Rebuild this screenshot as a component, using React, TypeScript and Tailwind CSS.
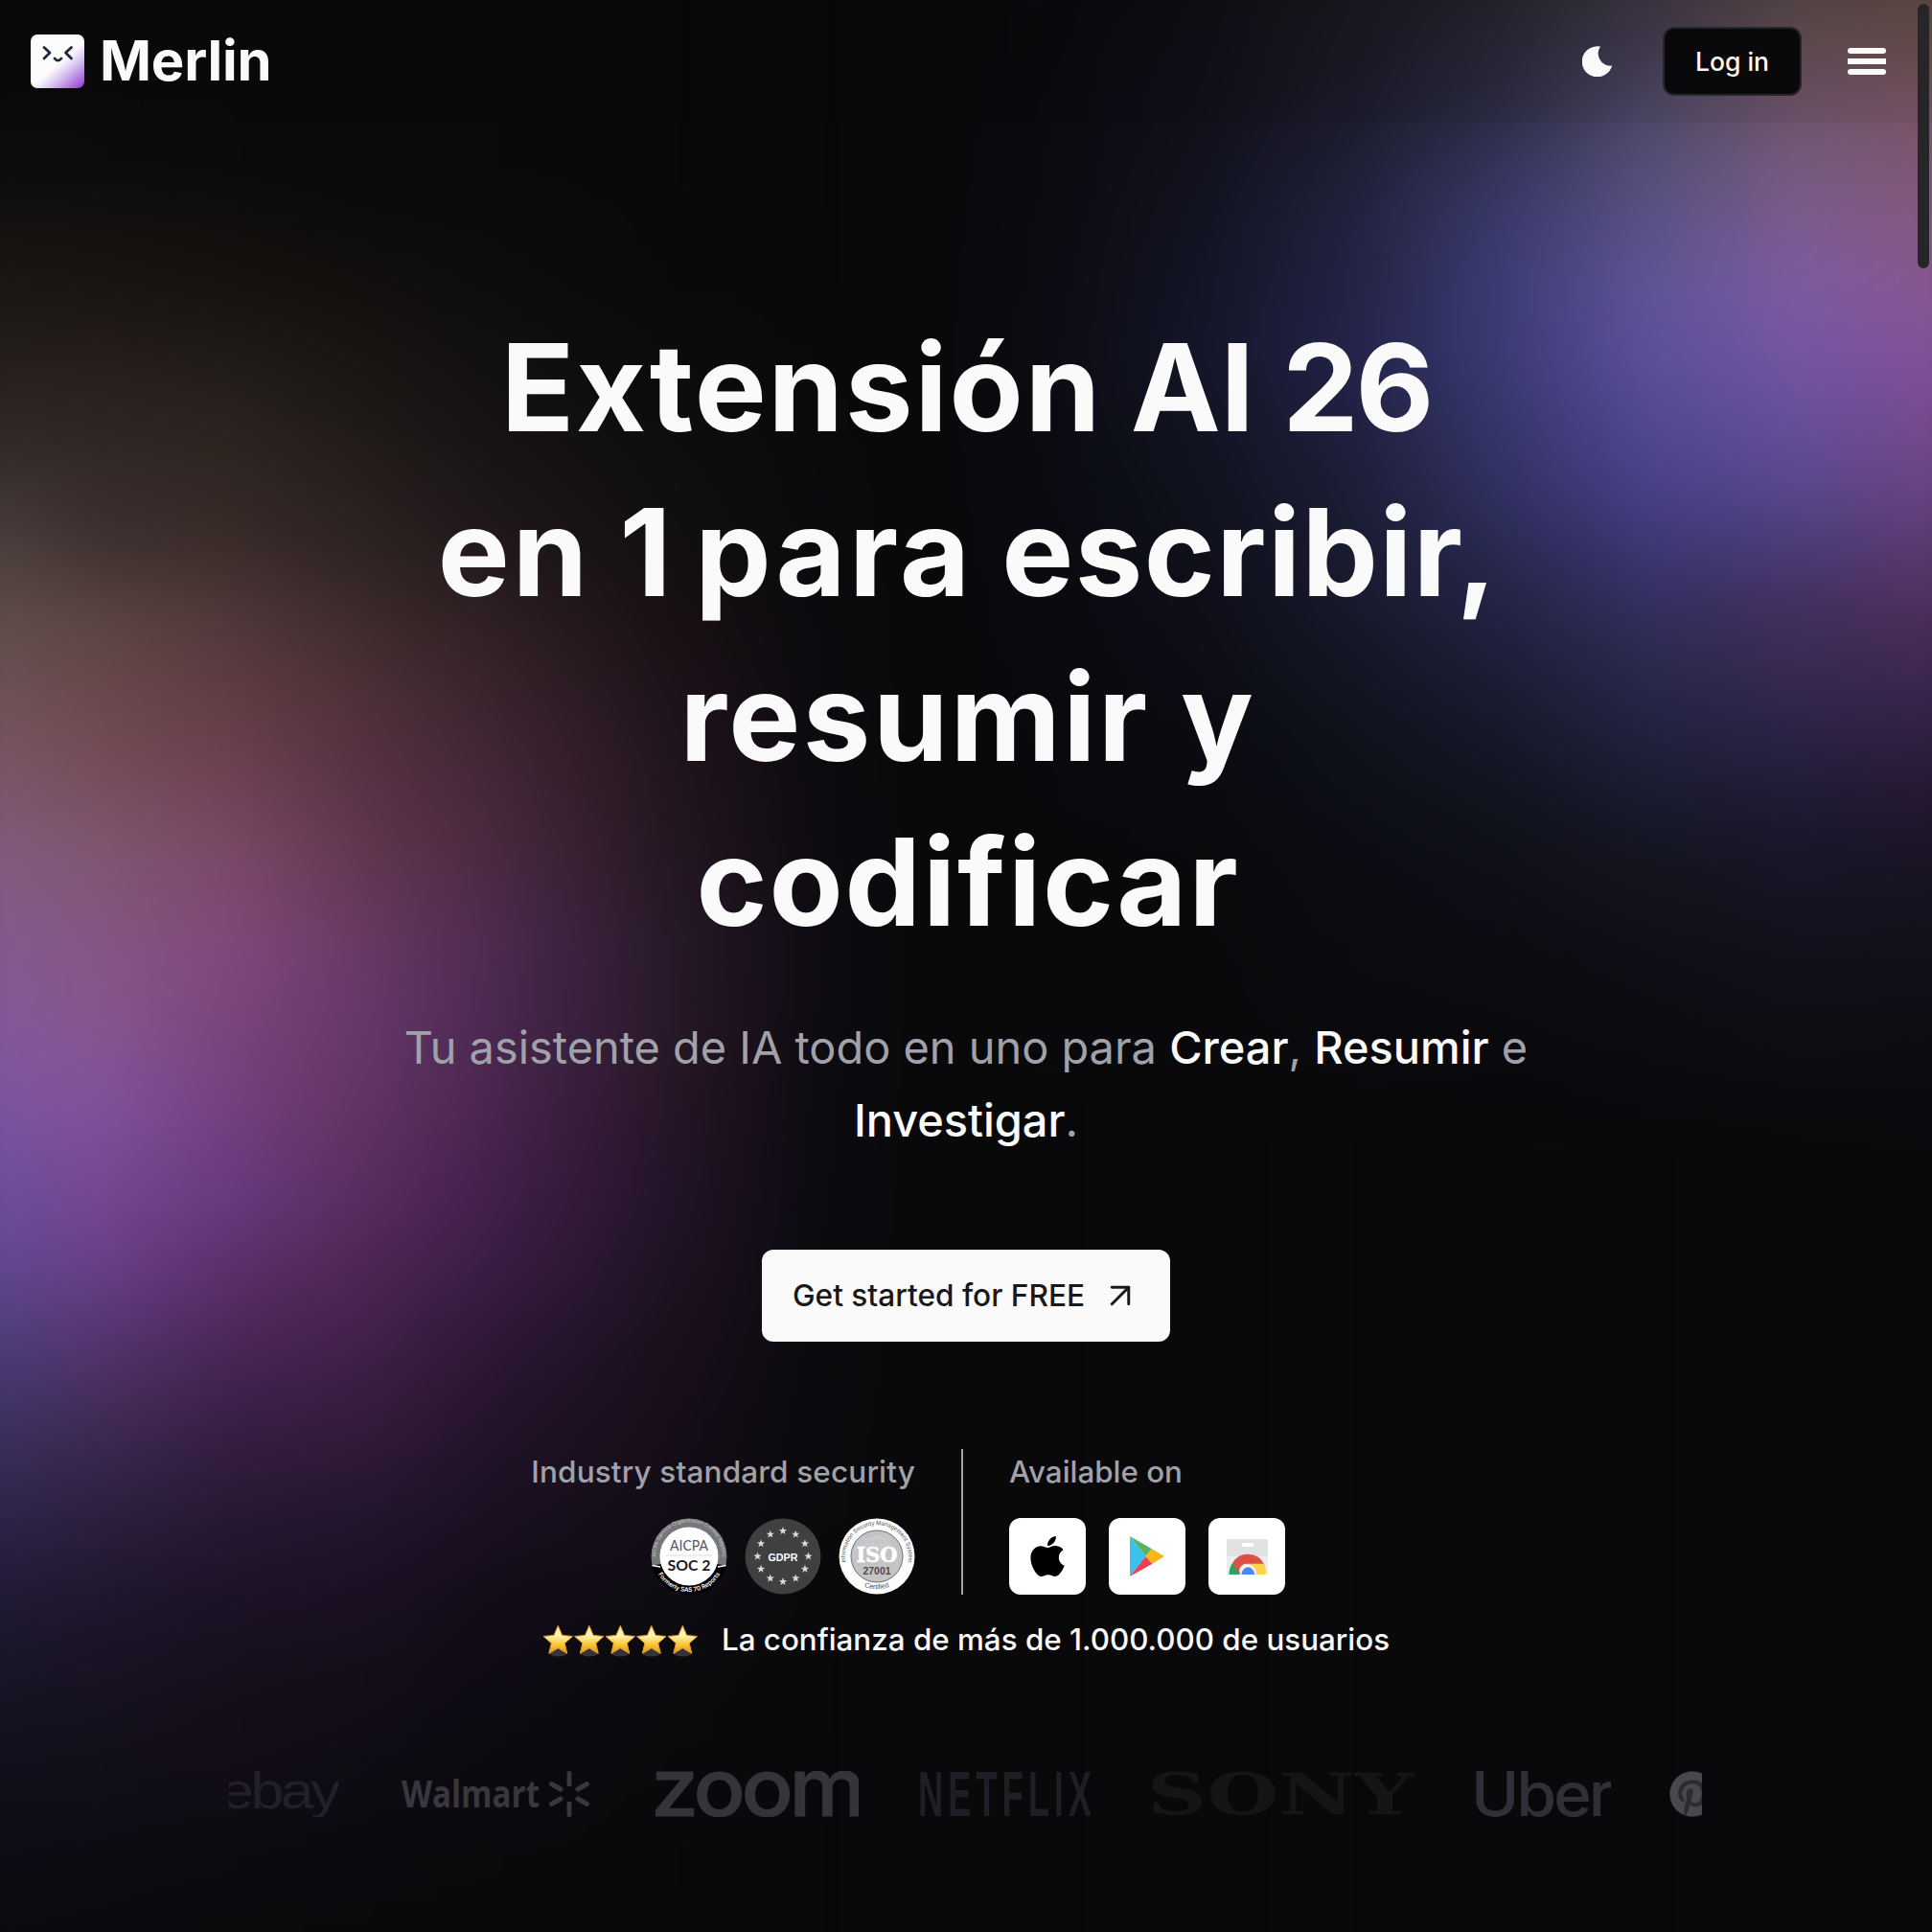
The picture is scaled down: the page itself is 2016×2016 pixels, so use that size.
import React from "react";
import { ArrowUpRight } from "lucide-react";
import { FaApple, FaPinterest } from "react-icons/fa";

/* ---------- Aurora background: colour columns blended from left to right ---------- */

type Column = { x: number; stops: string };

const LEFT_ROWS = [200, 316, 432, 501, 582, 663, 733, 802, 895, 987, 1068, 1150, 1242, 1312, 1393, 1474, 1566, 1648, 1729, 1821, 1914, 2016];

const zip = (rows: number[], colours: string) =>
  colours
    .split(" ")
    .map((c, i) => (c === "-" ? "" : `#${c} ${rows[i]}px`))
    .filter(Boolean)
    .join(", ");

const leftColumns: Column[] = [
  { x: 0, stops: "#0a0a0c 90px, " + zip(LEFT_ROWS, "0d0d0f 1c1713 2a2421 382f2d 4f4340 624f4b 6f555a 7a5868 825d80 835c92 825a9c 7a56a0 6c509c 5f4a92 4c3f7c 3c3264 2e264c 221b38 191527 11101d 0d0d15 0b0b0e") },
  { x: 134, stops: "#0a0a0c 90px, " + zip(LEFT_ROWS, "0d0c0d 1a1512 2a221f - 3f3230 5d4543 6a484c 754c58 805671 865584 87558f 81519a 74478f 683f86 53346c 3f2a54 2c1f3e 1f172e 181222 120f19 0d0c12 0a0a0d") },
  { x: 268, stops: "#0a0a0c 90px, " + zip(LEFT_ROWS, "0c0b0c 16120f 26201b - 3a2c29 52383a 5f3c42 6c4050 7a4865 80487a 7a447c 743f7e 68397c 5b2f6a 4a2658 371f44 281832 1c1226 160f1c 120d17 0c0b10 0a0a0c") },
  { x: 402, stops: "#0a0a0b 90px, " + zip(LEFT_ROWS, "0a0a0b 120f0e 1c1816 - 2d2323 3e2b2c 4d3038 553142 61364f 683863 663668 623262 582c60 4d2753 412048 331b3b 23152d 1a1022 140e19 0f0c14 0b0a0e 09090b") },
  { x: 536, stops: "#0a0a0b 90px, " + zip(LEFT_ROWS, "0a0a0c 0e0d0d 141111 - 201819 2e1f23 38232d 412635 482940 4b2a4e 49284f 47254c 401f48 391c42 2c1735 241329 1a1021 130c18 0f0b14 0c0a10 0a0a0d 09090b") },
  { x: 700, stops: "#09090b 90px, " + zip(LEFT_ROWS, "09090b 0a0a0c 0d0c0e - 131012 1a1116 1f141b 23161e 261823 291a2b 2a192a 281628 24142a 201324 1b101e 170e1a 120d16 0f0c12 0b0a0d 0a090c 09090b 09090b") },
  { x: 850, stops: "#09090b 300px, #0d0b0f 700px, #100c13 1000px, #0d0b10 1300px, #09090b 1700px" },
  { x: 960, stops: "#09090b 0px, #09090b 2016px" },
];

const RIGHT_ROWS = [0, 64, 128, 190, 257, 320, 385, 450, 514, 578, 640, 705, 770, 835, 900, 1000, 1100, 1200];

const rightColumns: Column[] = [
  { x: 1100, stops: "#0a0a0d 0px, #0c0d14 385px, #0a0b10 640px, #09090b 1000px" },
  { x: 1250, stops: "#0e0e12 0px, #10101a 128px, #131422 257px, #15162a 385px, #11131f 514px, #0e0f19 640px, #0b0c12 770px, #0a0a0d 900px, #09090b 1200px" },
  { x: 1400, stops: "#17171c 0px, #1b1b2a 128px, #222240 257px, #23244a 385px, #1d1e38 514px, #181a2c 640px, #10121c 770px, #0c0d13 900px, #09090b 1200px" },
  { x: 1550, stops: zip(RIGHT_ROWS, "232228 262634 2b2a40 33335a 3a3a6c 3c3c74 3b3b74 37376c 323264 2a2b54 232446 1d1e38 17192b 12141f 0f1018 0c0c12 0a0a0e 09090b") },
  { x: 1700, stops: zip(RIGHT_ROWS, "3a343c 40384a 4a4460 544e76 5a5286 5f5496 5d509c 534a94 4a428a 3e3876 34305f 2b294e 222240 1a1b30 14151f 0e0f16 0b0b10 09090b") },
  { x: 1850, stops: zip(RIGHT_ROWS, "504240 5d4b50 6c5264 745a7c 7c5c90 7c5ba0 7556a0 68509a 5c488e 4b3d78 43305f 392a54 2c2345 201b36 181628 11111b 0d0d12 09090b") },
  { x: 2016, stops: zip(RIGHT_ROWS, "5e4842 664a46 785460 7f5670 86587e 8a568c 855098 7a4a8c 6e4480 5f3a70 50305f 402850 331f42 261832 1b1424 121019 0d0c11 0a0a0d") },
];

const columns = [...leftColumns, ...rightColumns];

function Aurora() {
  return (
    <div className="absolute inset-0 overflow-hidden">
      <div className="absolute inset-0 scale-[1.03] blur-lg">
        {columns.map((c, i) => {
          const mask = i === 0 ? "none" : `linear-gradient(to right, transparent ${columns[i - 1].x}px, #000 ${c.x}px)`;
          return (
            <div
              key={c.x}
              className="absolute inset-0"
              style={{ backgroundImage: `linear-gradient(to bottom, ${c.stops})`, maskImage: mask }}
            />
          );
        })}
      </div>
    </div>
  );
}

/* ---------- Header ---------- */

function MerlinMark() {
  return (
    <svg viewBox="0 0 56 56" className="size-14">
      <defs>
        <linearGradient id="mark" x1="0.3" y1="0.2" x2="1" y2="1">
          <stop offset="0.38" stopColor="#fdfcfd" />
          <stop offset="0.6" stopColor="#d6c0ee" />
          <stop offset="0.95" stopColor="#9a45da" />
        </linearGradient>
      </defs>
      <rect width="56" height="56" rx="7" fill="url(#mark)" />
      <g fill="none" stroke="#1d2738" strokeWidth="2.8" strokeLinecap="round" strokeLinejoin="round">
        <path d="M14 13.5 L20 19 L14 25" />
        <path d="M42.5 13.5 L36.500 19 L42.500 25" />
        <path d="M25 25 Q28.500 29.400 32 25" />
      </g>
    </svg>
  );
}

function Header() {
  return (
    <header className="flex h-32 items-center justify-between bg-[#09090b]/4 pr-12 pl-8">
      <div className="flex items-center gap-4">
        <MerlinMark />
        <span className="-mt-0.5 text-[58px] leading-none font-bold tracking-[-0.2px]">Merlin</span>
      </div>
      <div className="flex items-center">
        <svg viewBox="0 0 32 32" className="size-8">
          <path d="M19 0.600 A16 16 0 1 0 31.200 20.500 A12.800 12.800 0 0 1 19 0.600 Z" fill="#fafafa" />
        </svg>
        <button className="ml-[52px] flex h-[72px] w-[145px] items-center justify-center rounded-xl border-2 border-[#27272a] bg-[#09090b] pt-0.5 text-[26.500px] font-medium">
          Log in
        </button>
        <div className="ml-12 flex w-10 flex-col gap-[5px]">
          <span className="h-1.5 rounded-full bg-[#fafafa]" />
          <span className="h-1.5 bg-[#fafafa]" />
          <span className="h-1.5 rounded-full bg-[#fafafa]" />
        </div>
      </div>
    </header>
  );
}

/* ---------- Security badges ---------- */

function SocBadge() {
  return (
    <svg viewBox="0 0 80 80" className="size-20">
      <defs>
        <path id="socTop" d="M6.500 47 A34.500 34.500 0 1 1 73.500 47" />
        <path id="socBottom" d="M5 53 A37.500 37.500 0 0 0 75 53" />
      </defs>
      <circle cx="40" cy="40" r="39.500" fill="#77777a" />
      <path d="M1 49.500 A40 40 0 0 0 79 49.500 L40 44 Z" fill="#000" />
      <path d="M1.500 49.500 L10 51 M78.500 49.500 L70 51" stroke="#fff" strokeWidth="1.500" />
      <circle cx="40" cy="40" r="30.500" fill="#fff" />
      <text fontSize="5.400" fill="#c4c4c6" textAnchor="middle">
        <textPath href="#socTop" startOffset="50%">AICPA Service Organization Control Reports</textPath>
      </text>
      <text fontSize="6.400" fontWeight="600" fill="#fff" textAnchor="middle">
        <textPath href="#socBottom" startOffset="50%">Formerly SAS 70 Reports</textPath>
      </text>
      <text x="40" y="34" fontFamily="Lato" fontSize="14.500" fill="#55555a" textAnchor="middle" textLength="40" lengthAdjust="spacingAndGlyphs">AICPA</text>
      <path d="M16 39 H64" stroke="#d6d6d8" strokeWidth="0.800" />
      <text x="40" y="54.500" fontFamily="Lato" fontWeight="700" fontSize="16" fill="#1c1c1f" textAnchor="middle" textLength="45" lengthAdjust="spacingAndGlyphs">SOC 2</text>
    </svg>
  );
}

const starPoints = (cx: number, cy: number, r: number, inner = 0.4) =>
  Array.from({ length: 10 }, (_, i) => {
    const a = (Math.PI / 5) * i - Math.PI / 2;
    const d = i % 2 ? r * inner : r;
    return `${(cx + d * Math.cos(a)).toFixed(2)},${(cy + d * Math.sin(a)).toFixed(2)}`;
  }).join(" ");

function GdprBadge() {
  return (
    <svg viewBox="0 0 80 80" className="size-20">
      <circle cx="40" cy="40" r="39.500" fill="#404040" />
      {Array.from({ length: 12 }, (_, i) => {
        const a = (Math.PI / 6) * i;
        return <polygon key={i} points={starPoints(40 + 26.5 * Math.sin(a), 40 - 26.5 * Math.cos(a), 4.4)} fill="#dcdcdc" />;
      })}
      <text x="40" y="45" fontFamily="Liberation Sans" fontWeight="700" fontSize="11.500" fill="#fff" textAnchor="middle" textLength="31" lengthAdjust="spacingAndGlyphs">GDPR</text>
    </svg>
  );
}

function IsoBadge() {
  return (
    <svg viewBox="0 0 80 80" className="size-20">
      <defs>
        <path id="isoTop" d="M7.500 46 A33 33 0 1 1 72.500 46" />
        <path id="isoBottom" d="M8 54 A35.500 35.500 0 0 0 72 54" />
      </defs>
      <circle cx="40" cy="40" r="39.500" fill="#fdfdfd" />
      <circle cx="40" cy="40" r="27" fill="#c4c4c6" stroke="#6c6c70" strokeWidth="1" />
      <g fill="none" stroke="#d6d6d8" strokeWidth="0.800">
        <circle cx="40" cy="30" r="11" />
        <ellipse cx="40" cy="30" rx="5" ry="11" />
        <path d="M25 22 H55 M23 28 H57" />
      </g>
      <text fontFamily="Liberation Sans" fontSize="6.200" fill="#515155" textAnchor="middle">
        <textPath href="#isoTop" startOffset="50%">Information Security Management System</textPath>
      </text>
      <text fontFamily="Liberation Sans" fontSize="7.200" fill="#515155" textAnchor="middle">
        <textPath href="#isoBottom" startOffset="50%">Certified</textPath>
      </text>
      <text x="40" y="45.500" fontFamily="DejaVu Serif" fontWeight="700" fontSize="22" fill="#fff" stroke="#fff" strokeWidth="0.500" textAnchor="middle" textLength="43" lengthAdjust="spacingAndGlyphs">ISO</text>
      <text x="40" y="58.500" fontFamily="Liberation Sans" fontWeight="700" fontSize="11" fill="#4a4a4e" textAnchor="middle" textLength="29" lengthAdjust="spacingAndGlyphs">27001</text>
    </svg>
  );
}

/* ---------- Store tiles ---------- */

function Tile({ children }: { children: React.ReactNode }) {
  return <div className="flex size-20 items-center justify-center rounded-xl bg-white">{children}</div>;
}

function PlayIcon() {
  return (
    <svg viewBox="0 0 36 42" className="h-[42px] w-9">
      <path d="M0 0 L16.500 21 L0 42 Z" fill="#3cc0ee" />
      <path d="M0 0 L23 13.200 L16.500 21 Z" fill="#58b368" />
      <path d="M0 42 L23.500 28.800 L16.500 21 Z" fill="#ea4058" />
      <path d="M23 13.200 L36 21 L23.500 28.800 L16.500 21 Z" fill="#f8b616" />
    </svg>
  );
}

function WebStoreIcon() {
  return (
    <svg viewBox="0 0 43 37" className="h-[37px] w-[43px]">
      <path d="M0 0 H43 V36 Q43 37 42 37 H1 Q0 37 0 36 Z" fill="#ededed" />
      <path d="M0 0 H43 V18 H0 Z" fill="#e2e2e2" />
      <rect x="15.500" y="4" width="13" height="4" rx="2" fill="#fff" />
      <path d="M2.500 37 A19 20.500 0 0 1 6 25 L16 37 Z" fill="#23a566" />
      <path d="M22 25.500 H39 A19 20 0 0 1 41 37 H22 Z" fill="#fdd24e" />
      <path d="M6 25 A19 19 0 0 1 39 25.800 H22 A8 9 0 0 0 13 37 Z" fill="#dc5145" />
      <path d="M13.500 37 A8.700 10.500 0 0 1 31 37 Z" fill="#f4f4f4" />
      <path d="M15.300 37 A7 8.800 0 0 1 29.200 37 Z" fill="#4a88f0" />
    </svg>
  );
}

function StarRow() {
  return (
    <svg viewBox="0 0 163 34" className="h-[34px] w-[163px]">
      <defs>
        <linearGradient id="gold" x1="0" y1="0" x2="0" y2="1">
          <stop offset="0" stopColor="#fbe9a0" />
          <stop offset="0.35" stopColor="#fff3b8" />
          <stop offset="0.6" stopColor="#fbd24a" />
          <stop offset="1" stopColor="#e8920f" />
        </linearGradient>
      </defs>
      {[0, 1, 2, 3, 4].map((i) => (
        <g key={i}>
          <ellipse cx={16.3 + i * 32.5} cy="29" rx="10" ry="4.5" fill="#4a4a50" opacity="0.65" />
          <polygon points={starPoints(16.3 + i * 32.5, 17.4, 16, 0.46)} fill="url(#gold)" stroke="#e0a030" strokeWidth="1" strokeLinejoin="round" />
        </g>
      ))}
    </svg>
  );
}

/* ---------- Partner strip ---------- */

function Brands() {
  return (
    <div className="ml-[239px] flex h-12 w-[1537px] overflow-hidden">
      <svg viewBox="0 0 114 48" className="h-12 w-[114px] shrink-0">
        <text x="-9" y="38.500" fontFamily="Liberation Sans" fontSize="54" fill="#231f29" textLength="122" lengthAdjust="spacingAndGlyphs" letterSpacing="-3">ebay</text>
      </svg>
      <svg viewBox="0 0 198 48" className="ml-[66px] h-12 w-[198px] shrink-0">
        <text x="0" y="38" fontFamily="Open Sans" fontWeight="700" fontSize="39" fill="#38373d" textLength="144" lengthAdjust="spacingAndGlyphs">Walmart</text>
        <g stroke="#38373d" strokeWidth="5" strokeLinecap="round">
          <path d="M175 2.500 V14 M175 34 V45.500" />
          <path d="M156.500 13.500 L166 19 M184 29 L193.500 34.500 M193.500 13.500 L184 19 M166 29 L156.500 34.500" />
        </g>
      </svg>
      <svg viewBox="0 0 213 48" className="ml-[66px] h-12 w-[213px] shrink-0">
        <text x="-4" y="47" fontFamily="Inter" fontWeight="500" fontSize="84" fill="#35343a" stroke="#35343a" strokeWidth="1" letterSpacing="-4" textLength="220" lengthAdjust="spacingAndGlyphs">zoom</text>
      </svg>
      <svg viewBox="0 0 179 48" className="ml-16 h-12 w-[179px] shrink-0">
        <text x="-2" y="47" fontFamily="Liberation Sans" fontWeight="700" fontSize="67" fill="#1f1e25" letterSpacing="9" textLength="186" lengthAdjust="spacingAndGlyphs">NETFLIX</text>
      </svg>
      <svg viewBox="0 0 276 48" className="ml-[61px] h-12 w-[276px] shrink-0">
        <text x="-3" y="45" fontFamily="DejaVu Serif" fontWeight="700" fontSize="60" fill="#151517" textLength="278" lengthAdjust="spacingAndGlyphs">SONY</text>
      </svg>
      <svg viewBox="0 0 141 48" className="ml-16 h-12 w-[141px] shrink-0">
        <text x="-5" y="47" fontFamily="Inter" fontWeight="500" fontSize="64" fill="#302f36" letterSpacing="-3" textLength="146" lengthAdjust="spacingAndGlyphs">Uber</text>
      </svg>
      <FaPinterest className="ml-[61px] size-12 shrink-0 rounded-full bg-[#2c2b31] text-[#49484f]" />
    </div>
  );
}

/* ---------- Page ---------- */

export default function App() {
  return (
    <div className="relative h-[2016px] w-[2016px] overflow-hidden bg-[#09090b] font-['Inter',sans-serif] text-[#fafafa]">
      <Aurora />
      <div className="relative flex flex-col">
        <Header />

        <h1 className="mt-[190px] flex flex-col items-center text-[126px] leading-[172px] font-bold whitespace-nowrap">
          <span>
            <span className="tracking-[1.9px]">Extensión</span> <span className="tracking-[-0.5px]">AI</span>{" "}
            <span className="tracking-[-3px]">26</span>
          </span>
          <span className="pl-1">
            <span className="tracking-[3px]">en</span> <span className="tracking-[-5px]">1</span>{" "}
            <span className="tracking-[3.4px]">para</span> <span className="tracking-[1.4px]">escribir,</span>
          </span>
          <span className="pl-1 tracking-[2.5px]">resumir y</span>
          <span className="pl-1 tracking-[1.9px]">codificar</span>
        </h1>

        <p className="mt-[49px] text-center text-[46.900px] leading-[76px] text-[#a1a1aa]">
          Tu asistente de IA todo en uno para <strong className="font-medium text-[#fafafa]">Crear</strong>,{" "}
          <strong className="font-medium text-[#fafafa]">Resumir</strong> e
          <br />
          <strong className="font-medium text-[#fafafa]">Investigar</strong>.
        </p>

        <button className="mt-[97px] flex h-24 w-[426px] items-center justify-between self-center rounded-xl bg-[#fafafa] pr-[31px] pl-8 text-[31.600px] font-medium whitespace-nowrap text-[#18181b]">
          Get started for FREE
          <ArrowUpRight size={42} strokeWidth={1.7} />
        </button>

        <section className="mt-28 ml-[555px] flex h-[152px] gap-12">
          <div className="flex w-[400px] flex-col items-end justify-between">
            <span className="text-[31.500px] leading-[48px] font-medium tracking-[0.15px] whitespace-nowrap text-[#a1a1aa]">Industry standard security</span>
            <div className="flex gap-[18px]">
              <SocBadge />
              <GdprBadge />
              <IsoBadge />
            </div>
          </div>
          <div className="w-0.5 bg-[#a1a1aa]" />
          <div className="flex flex-col justify-between">
            <span className="text-[31.300px] leading-[48px] font-medium whitespace-nowrap text-[#a1a1aa]">Available on</span>
            <div className="flex gap-6">
              <Tile>
                <FaApple className="size-[48px] text-black" />
              </Tile>
              <Tile>
                <PlayIcon />
              </Tile>
              <Tile>
                <WebStoreIcon />
              </Tile>
            </div>
          </div>
        </section>

        <div className="mt-6 flex h-12 items-center justify-center gap-6">
          <StarRow />
          <span className="text-[31.350px] font-medium whitespace-nowrap">La confianza de más de 1.000.000 de usuarios</span>
        </div>

        <div className="mt-28">
          <Brands />
        </div>
      </div>
      <div className="absolute top-1 right-[3px] h-[276px] w-3 rounded-full bg-[#262629]" />
    </div>
  );
}
